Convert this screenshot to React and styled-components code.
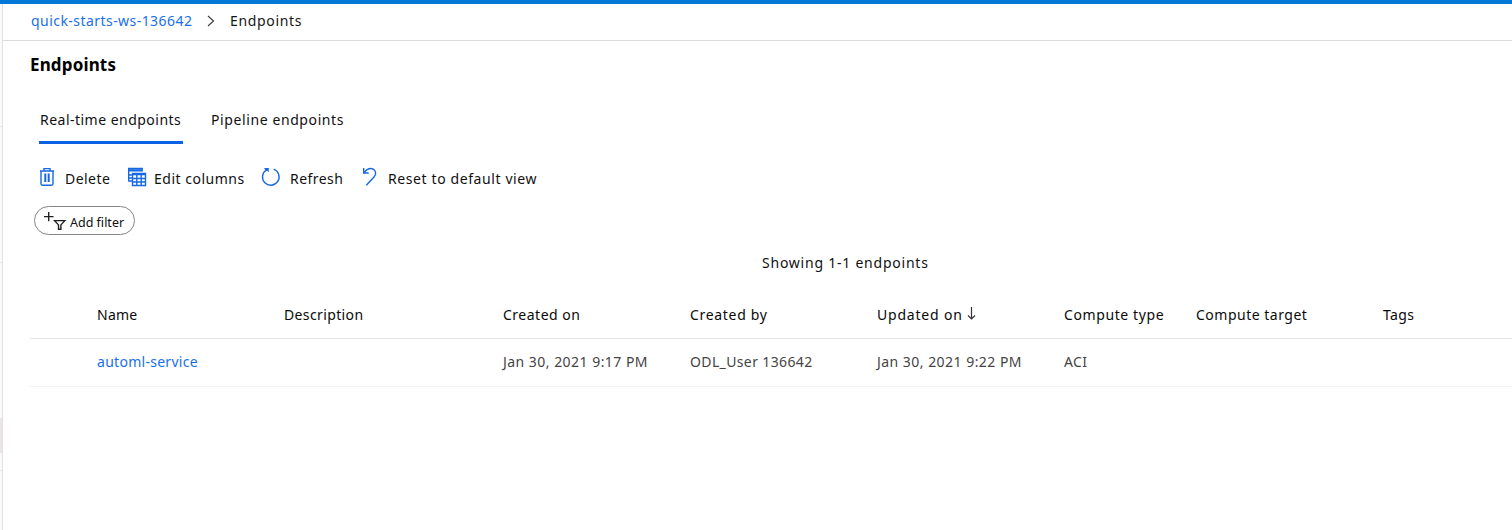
import React from "react";
import styled, { createGlobalStyle } from "styled-components";

const GlobalStyle = createGlobalStyle`
  * { box-sizing: border-box; }
  body {
    margin: 0;
    background: #fff;
    color: #111;
    font: 14px/20px "Noto Sans", "Open Sans", sans-serif;
    overflow: hidden;
  }
`;

const Page = styled.div`
  display: flex;
  flex-direction: column;
  height: 530px;
  border-top: 4px solid #0078d7;
`;

const Body = styled.div`
  display: flex;
  flex: 1;
`;

const Rail = styled.div`
  display: flex;
  flex-direction: column;
  width: 3px;
  border-right: 1px solid #e4e0e4;
  background: #fbf9fb;
`;

const RailMark = styled.div`
  height: ${(p) => p.$height}px;
  margin-top: ${(p) => p.$gap}px;
  background: #e8e4e8;
`;

const Main = styled.main`
  flex: 1;
  min-width: 0;
`;

const Text = styled.span`
  display: block;
  white-space: nowrap;
  letter-spacing: ${(p) => p.$track || 0}px;
`;

const Breadcrumb = styled.nav`
  display: flex;
  height: 37px;
  padding: 7px 0 0 28px;
  border-bottom: 1px solid #dcdcdc;
`;

const Crumb = styled(Text)`
  width: ${(p) => p.$width}px;
  color: ${(p) => (p.$link ? "#1a6fe8" : "#171717")};
`;

const Chevron = styled.svg`
  width: 8px;
  height: 12px;
  margin: 4px 15px 0 0;
`;

const Title = styled.h1`
  margin: 14px 0 0 27px;
  font-size: 17px;
  line-height: 20px;
  font-weight: 700;
  color: #000;
  letter-spacing: ${(p) => p.$track}px;
`;

const Tabs = styled.div`
  display: flex;
  gap: 27px;
  margin: 31px 0 0 36px;
`;

const Tab = styled.div`
  width: 144px;
  height: 38px;
  padding: 4px 0 0 1px;
  border-bottom: 3px solid ${(p) => (p.$active ? "#0b62e4" : "transparent")};
`;

const Toolbar = styled.div`
  display: flex;
  height: 20px;
  margin: 25px 0 0 36px;
`;

const Command = styled.div`
  display: flex;
  width: ${(p) => p.$width}px;
`;

const CommandIcon = styled.svg`
  flex: none;
  width: 20px;
  height: 20px;
  margin: -2px ${(p) => p.$gap}px 0 0;
  fill: none;
  stroke: #1668e3;
  stroke-width: 1.4;
`;

const FilterPill = styled.div`
  display: flex;
  width: 101px;
  height: 29px;
  margin: 17px 0 0 31px;
  padding: 5px 0 0 9px;
  border: 1px solid #858585;
  border-radius: 15px;
  font-size: 12.5px;
`;

const FilterIcon = styled.svg`
  flex: none;
  width: 24px;
  height: 20px;
  margin-right: 2px;
  fill: none;
  stroke: #1f1f1f;
  stroke-width: 1.4;
`;

const FilterLabel = styled(Text)`
  padding-top: 1px;
`;

const Summary = styled(Text)`
  margin: 18px 0 0 759px;
`;

const Table = styled.div`
  margin: 19px 0 0 27px;
`;

const Row = styled.div`
  display: grid;
  grid-template-columns: 187px 219px 187px 187px 187px 132px 187px 1fr;
  align-items: center;
  height: ${(p) => (p.$head ? 47 : 48)}px;
  padding: 0 0 ${(p) => (p.$head ? 0 : 2)}px 67px;
  border-bottom: 1px solid ${(p) => (p.$head ? "#e6e6e6" : "#f3f3f3")};
  color: ${(p) => (p.$head ? "#0a0a0a" : "#444")};
`;

const Link = styled(Text)`
  color: #1a6fe8;
`;

const SortHead = styled.div`
  display: flex;
  gap: 4px;
`;

const SortArrow = styled.svg`
  width: 9px;
  height: 16px;
  margin-top: 1px;
`;

export default function App() {
  return (
    <Page>
      <GlobalStyle />
      <Body>
        <Rail>
          <RailMark $gap={122} $height={1} />
          <RailMark $gap={135} $height={1} />
          <RailMark $gap={155} $height={35} />
          <RailMark $gap={17} $height={1} />
        </Rail>
        <Main>
          <Breadcrumb>
            <Crumb $link $width={176} $track={0.45}>quick-starts-ws-136642</Crumb>
            <Chevron viewBox="0 0 8 12" fill="none" stroke="#444" strokeWidth="1.2">
              <path d="M1 1l5.5 5L1 11" />
            </Chevron>
            <Crumb $track={0.67}>Endpoints</Crumb>
          </Breadcrumb>
          <Title $track={0.15}>Endpoints</Title>
          <Tabs>
            <Tab $active><Text $track={0.48}>Real-time endpoints</Text></Tab>
            <Tab><Text $track={0.6}>Pipeline endpoints</Text></Tab>
          </Tabs>
          <Toolbar>
            <Command $width={88}>
              <CommandIcon $gap={6} viewBox="0 0 20 20">
                <path d="M1 4h14M5 3.8V1.6h6v2.2M2 4v12.8q0 1.4 1.4 1.4h9.2q1.4 0 1.4-1.4V4" />
                <path d="M6.3 6.5v8.5M9.7 6.5v8.5" strokeWidth="2" />
              </CommandIcon>
              <Text $track={0.45}>Delete</Text>
            </Command>
            <Command $width={134}>
              <CommandIcon $gap={7} viewBox="0 0 20 20">
                <path d="M1.7 14.5V1.5H16M1.7 14H5M1.7 8H5M1.7 11H5" />
                <path d="M1 2.2h15v2.3H1z" fill="#1668e3" stroke="none" />
                <path d="M5.5 6.5h13v12h-13zM5.5 7.5h13M5.5 11.5h13M5.5 15h13M9.8 8v10M14.2 8v10" />
              </CommandIcon>
              <Text $track={0.5}>Edit columns</Text>
            </Command>
            <Command $width={101}>
              <CommandIcon $gap={9} viewBox="0 0 20 20">
                <path d="M12.7 2.2A8.3 8.3 0 1 1 5.3 3" />
                <path d="M3.2 1h4.6v4.2L6.3 3.7 4.6 4z" fill="#1668e3" stroke="none" />
              </CommandIcon>
              <Text $track={0.45}>Refresh</Text>
            </Command>
            <Command>
              <CommandIcon $gap={6} viewBox="0 0 20 20">
                <path d="M1.7 1v5h5M2 5.8C5 1.3 9 .7 11.5 2.3c3 2.2 2.5 5.5.5 7.7L4.3 18.3" />
              </CommandIcon>
              <Text $track={0.6}>Reset to default view</Text>
            </Command>
          </Toolbar>
          <FilterPill>
            <FilterIcon viewBox="0 0 24 20">
              <path d="M0 4.6h9.5M4.7 0v9.3M10.6 8.6h10.2l-3.9 4.3v4.3h-2.4v-4.3z" />
            </FilterIcon>
            <FilterLabel>Add filter</FilterLabel>
          </FilterPill>
          <Summary $track={0.77}>Showing 1-1 endpoints</Summary>
          <Table>
            <Row $head>
              <Text $track={0.25}>Name</Text>
              <Text $track={0.37}>Description</Text>
              <Text $track={0.5}>Created on</Text>
              <Text $track={0.68}>Created by</Text>
              <SortHead>
                <Text $track={0.8}>Updated on</Text>
                <SortArrow viewBox="0 0 9 16" fill="none" stroke="#333" strokeWidth="1.2">
                  <path d="M4.5 1v12M1 9.5l3.5 3.5L8 9.5" />
                </SortArrow>
              </SortHead>
              <Text $track={0.6}>Compute type</Text>
              <Text $track={0.5}>Compute target</Text>
              <Text $track={0.35}>Tags</Text>
            </Row>
            <Row>
              <Link $track={0.28}>automl-service</Link>
              <Text />
              <Text $track={0.47}>Jan 30, 2021 9:17 PM</Text>
              <Text $track={0.37}>ODL_User 136642</Text>
              <Text $track={0.47}>Jan 30, 2021 9:22 PM</Text>
              <Text $track={0.4}>ACI</Text>
            </Row>
          </Table>
        </Main>
      </Body>
    </Page>
  );
}
